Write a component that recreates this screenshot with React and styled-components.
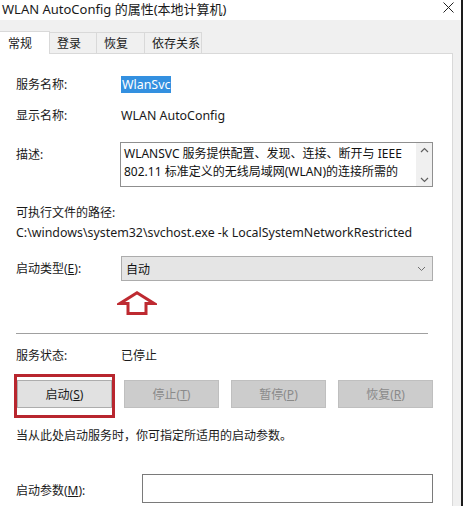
import React from 'react'
import styled, { createGlobalStyle, css } from 'styled-components'

const GlobalStyle = createGlobalStyle`
  html, body {
    margin: 0;
    padding: 0;
    background: #ffffff;
  }
  body {
    font-family: "Noto Sans", "Noto Sans CJK SC", sans-serif;
    font-size: 12px;
    color: #111111;
  }
`

const Page = styled.div`
  width: 464px;
  height: 506px;
  overflow: hidden;
  display: flex;
  background: #ffffff;
`

const Window = styled.div`
  width: 461px;
  height: 100%;
  display: flex;
  flex-direction: column;
  border-right: 2px solid #1c1c1c;
`

const TitleBar = styled.div`
  height: 20px;
  flex: none;
  box-sizing: border-box;
  background: #ffffff;
  display: flex;
  justify-content: space-between;
  align-items: flex-start;
  padding: 1px 7px 0 2px;
`

const Title = styled.div`
  font-size: 13px;
  line-height: 17px;
  color: #1a1a1a;
  white-space: nowrap;
`

const CloseIcon = styled.svg`
  margin-top: 1px;
`

const Body = styled.div`
  flex: 1;
  background: #f0f0f0;
  padding: 12px 8px 0 0;
  display: flex;
  flex-direction: column;
`

const TabStrip = styled.div`
  height: 21px;
  display: flex;
  align-items: flex-end;
`

const Tab = styled.div`
  width: ${p => p.$w}px;
  height: 21px;
  box-sizing: border-box;
  border: 1px solid #d9d9d9;
  border-bottom: none;
  border-left: none;
  display: flex;
  align-items: center;
  padding-left: 7px;
  font-size: 12px;
  color: #1a1a1a;
  ${p => p.$active && css`
    height: 23px;
    background: #ffffff;
    padding-left: 8px;
    margin-bottom: -1px;
    position: relative;
    z-index: 1;
  `}
`

const Panel = styled.div`
  flex: 1;
  background: #ffffff;
  border-top: 1px solid #d9d9d9;
  border-right: 1px solid #d9d9d9;
  padding: 22px 19px 0 16px;
  display: flex;
  flex-direction: column;
`

const Row = styled.div`
  display: grid;
  grid-template-columns: ${p => p.$label || 105}px 1fr;
  align-items: ${p => p.$top ? 'start' : 'center'};
  margin-top: ${p => p.$mt || 0}px;
`

const Label = styled.div`
  line-height: 18px;
  white-space: nowrap;
  padding-top: ${p => p.$pt || 0}px;
  color: #1a1a1a;
  u { text-decoration: underline; }
`

const Text = styled.div`
  line-height: 18px;
  white-space: nowrap;
  margin-top: ${p => p.$mt || 0}px;
  font-size: ${p => p.$latin ? '12.4px' : '12px'};
  color: #1a1a1a;
`

const Selected = styled.span`
  display: inline-block;
  background: #3390e0;
  color: #ffffff;
  padding: 0 1px;
  line-height: 17px;
`

const Description = styled.div`
  height: 45px;
  box-sizing: border-box;
  border: 1px solid #8f8f8f;
  display: flex;
  margin-left: -1px;
`

const DescText = styled.div`
  flex: 1;
  padding: 2px 0 0 3px;
  line-height: 18px;
  overflow: hidden;
  white-space: nowrap;
`

const ScrollBar = styled.div`
  width: 16px;
  background: #f0f0f0;
  display: flex;
  flex-direction: column;
  justify-content: space-between;
  align-items: center;
  padding: 4px 0 3px;
`

const Select = styled.div`
  height: 25px;
  box-sizing: border-box;
  background: #e5e5e5;
  border: 1px solid #acacac;
  display: flex;
  align-items: center;
  justify-content: space-between;
  padding: 0 6px 0 4px;
`

const ArrowWrap = styled.div`
  margin: 10px 0 0 101px;
  height: 24px;
`

const Divider = styled.div`
  height: 1px;
  background: #a0a0a0;
  margin-top: 18px;
  width: 412px;
`

const ButtonRow = styled.div`
  display: grid;
  grid-template-columns: repeat(4, 95px);
  column-gap: 12px;
  margin: 15px 0 0 1px;
`

const Marked = styled.div`
  position: relative;
  display: flex;
  &::after {
    content: '';
    position: absolute;
    left: -3px;
    right: -3px;
    top: -6px;
    bottom: -10px;
    border: 3px solid #b8262e;
    box-sizing: border-box;
    pointer-events: none;
  }
`

const Button = styled.div`
  flex: 1;
  height: 28px;
  box-sizing: border-box;
  display: flex;
  align-items: center;
  justify-content: center;
  border: 1px solid ${p => p.$disabled ? '#bfbfbf' : '#adadad'};
  background: ${p => p.$disabled ? '#cccccc' : '#e1e1e1'};
  color: ${p => p.$disabled ? '#8a8a8a' : '#1a1a1a'};
  u { text-decoration: underline; }
`

const Input = styled.div`
  height: 29px;
  box-sizing: border-box;
  border: 1px solid #7a7a7a;
`

const ScrollArrow = ({ up }) => (
  <svg width="9" height="6" viewBox="0 0 9 6">
    <path d={up ? 'M1 5 L4.5 1.5 L8 5' : 'M1 1 L4.5 4.5 L8 1'} fill="none" stroke="#606060" strokeWidth="1.2" />
  </svg>
)

export default function App() {
  return (
    <>
      <GlobalStyle />
      <Page>
        <Window>
          <TitleBar>
            <Title>WLAN AutoConfig 的属性(本地计算机)</Title>
            <CloseIcon width="11" height="11" viewBox="0 0 11 11">
              <path d="M0.5 0.5 L10.5 10.5 M10.5 0.5 L0.5 10.5" stroke="#222" strokeWidth="1" />
            </CloseIcon>
          </TitleBar>
          <Body>
            <TabStrip>
              <Tab $w={50} $active>常规</Tab>
              <Tab $w={47}>登录</Tab>
              <Tab $w={48}>恢复</Tab>
              <Tab $w={57}>依存关系</Tab>
            </TabStrip>
            <Panel>
              <Row>
                <Label>服务名称:</Label>
                <Text $latin><Selected>WlanSvc</Selected></Text>
              </Row>
              <Row $mt={13}>
                <Label>显示名称:</Label>
                <Text $latin>WLAN AutoConfig</Text>
              </Row>
              <Row $mt={17} $top>
                <Label $pt={4}>描述:</Label>
                <Description>
                  <DescText>
                    WLANSVC 服务提供配置、发现、连接、断开与 IEEE<br />
                    802.11 标准定义的无线局域网(WLAN)的连接所需的
                  </DescText>
                  <ScrollBar>
                    <ScrollArrow up />
                    <ScrollArrow />
                  </ScrollBar>
                </Description>
              </Row>
              <Text $mt={17}>可执行文件的路径:</Text>
              <Text $mt={2} $latin>C:\windows\system32\svchost.exe -k LocalSystemNetworkRestricted</Text>
              <Row $mt={14}>
                <Label>启动类型(<u>E</u>):</Label>
                <Select>
                  <span>自动</span>
                  <svg width="9" height="6" viewBox="0 0 9 6">
                    <path d="M1 1 L4.5 4.5 L8 1" fill="none" stroke="#707070" strokeWidth="1" />
                  </svg>
                </Select>
              </Row>
              <ArrowWrap>
                <svg width="40" height="24" viewBox="0 0 40 24">
                  <path d="M20 1.8 L37 12.5 L29 12.5 L29 22.5 L11 22.5 L11 12.5 L3 12.5 Z" fill="none" stroke="#be2a31" strokeWidth="3" strokeLinejoin="miter" />
                </svg>
              </ArrowWrap>
              <Divider />
              <Row $mt={13}>
                <Label>服务状态:</Label>
                <Text>已停止</Text>
              </Row>
              <ButtonRow>
                <Marked>
                  <Button>启动(<u>S</u>)</Button>
                </Marked>
                <Button $disabled>停止(<u>T</u>)</Button>
                <Button $disabled>暂停(<u>P</u>)</Button>
                <Button $disabled>恢复(<u>R</u>)</Button>
              </ButtonRow>
              <Text $mt={19}>当从此处启动服务时，你可指定所适用的启动参数。</Text>
              <Row $mt={29} $label={126}>
                <Label $pt={4}>启动参数(<u>M</u>):</Label>
                <Input />
              </Row>
            </Panel>
          </Body>
        </Window>
      </Page>
    </>
  )
}
